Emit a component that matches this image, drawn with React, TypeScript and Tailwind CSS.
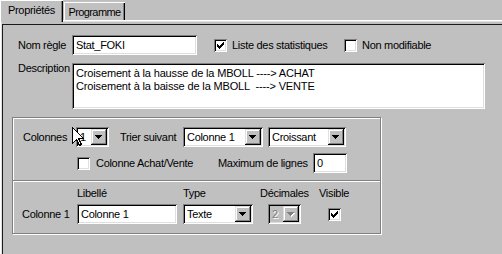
const sunken =
  "shadow-[inset_1px_1px_0_#808080,inset_-1px_-1px_0_#fff,inset_2px_2px_0_#000,inset_-2px_-2px_0_#dfdfdf]";
const raised =
  "shadow-[inset_-1px_-1px_0_#000,inset_1px_1px_0_#dfdfdf,inset_-2px_-2px_0_#808080,inset_2px_2px_0_#fff]";

function Arrow({ disabled }: { disabled?: boolean }) {
  return (
    <svg width="8" height="5" viewBox="0 0 8 5" shapeRendering="crispEdges">
      {disabled && <polygon points="1,1 8,1 4.5,5" fill="#fff" />}
      <polygon points="0,0 7,0 3.5,4" fill={disabled ? "#808080" : "#000"} />
    </svg>
  );
}

function Combo({
  value,
  width,
  disabled,
}: {
  value: string;
  width: string;
  disabled?: boolean;
}) {
  return (
    <div
      className={`flex h-[20px] shrink-0 p-[2px] ${width} ${sunken} ${
        disabled ? "bg-[#c0c0c0]" : "bg-white"
      }`}
    >
      <span
        className={`flex-1 truncate pl-[2px] leading-[16px] ${
          disabled ? "text-[#808080] [text-shadow:1px_1px_0_#fff]" : ""
        }`}
      >
        {value}
      </span>
      <span className={`flex h-[16px] w-[16px] items-center justify-center bg-[#c0c0c0] ${raised}`}>
        <Arrow disabled={disabled} />
      </span>
    </div>
  );
}

function Input({ value, width }: { value: string; width: string }) {
  return (
    <div className={`h-[20px] shrink-0 bg-white pl-[4px] leading-[20px] ${width} ${sunken}`}>
      {value}
    </div>
  );
}

function Checkbox({ checked }: { checked?: boolean }) {
  return (
    <span className={`flex h-[13px] w-[13px] shrink-0 bg-white ${sunken}`}>
      {checked && (
        <svg width="13" height="13" viewBox="0 0 13 13" shapeRendering="crispEdges">
          <path
            d="M9 3h1v1h-1zM8 4h2v1h-2zM3 5h1v1h-1zM7 5h3v1h-3zM3 6h2v1h-2zM6 6h3v1h-3zM3 7h5v1h-5zM4 8h3v1h-3zM5 9h1v1h-1z"
            fill="#000"
          />
        </svg>
      )}
    </span>
  );
}

export default function App() {
  return (
    <div className="relative flex h-[254px] w-[502px] flex-col overflow-hidden bg-[#c0c0c0] font-['Liberation_Sans',Arial,sans-serif] text-[11px] leading-[13px] tracking-[-0.3px] text-black">
      <div className="flex h-[20px] items-start">
        <div className="relative z-10 flex h-[22px] w-[63px] justify-center bg-[#c0c0c0] pt-[4px] shadow-[inset_1px_1px_0_#fff,inset_-1px_0_0_#000,inset_-2px_0_0_#808080]">
          Propriétés
        </div>
        <div className="ml-[1px] mt-[2px] flex h-[18px] w-[61px] justify-center pt-[4px] tracking-[-0.6px] shadow-[inset_1px_1px_0_#fff,inset_-1px_0_0_#000,inset_-2px_0_0_#808080]">
          Programme
        </div>
      </div>

      <div className="flex-1 border-l border-t border-white">
        <div className="h-full border-l border-t border-[#dfdfdf]">
          <div className="mt-[2px] h-full border-l border-t border-[#1a1a1a]">
            {/* Nom règle */}
            <div className="mt-[10px] flex h-[20px] items-center pl-[15px]">
              <span className="w-[54px]">Nom règle</span>
              <Input value="Stat_FOKI" width="w-[125px]" />
              <span className="ml-[17px] flex items-center gap-[5px]">
                <Checkbox checked />
                <span className="w-[107px]">Liste des statistiques</span>
              </span>
              <span className="ml-[5px] flex items-center gap-[5px]">
                <Checkbox />
                <span>Non modifiable</span>
              </span>
            </div>

            {/* Description */}
            <div className="mt-[8px] flex pl-[15px]">
              <span className="w-[54px] leading-[11px]">Description</span>
              <div
                className={`h-[46px] w-[413px] whitespace-pre bg-white pl-[4px] pt-[4px] tracking-[-0.15px] ${sunken}`}
              >
                <div>Croisement à la hausse de la MBOLL ----&gt; ACHAT</div>
                <div>Croisement à la baisse de la MBOLL  ----&gt; VENTE</div>
              </div>
            </div>

            {/* Colonnes group */}
            <div className="ml-[9px] mt-[8px] w-[369px] border border-[#808080] pb-[9px] shadow-[inset_1px_1px_0_#fff,1px_1px_0_#fff]">
              <div className="mt-[9px] flex h-[20px] items-center pl-[10px]">
                <span className="w-[53px]">Colonnes</span>
                <Combo value="1" width="w-[33px]" />
                <span className="ml-[11px] w-[63px]">Trier suivant</span>
                <Combo value="Colonne 1" width="w-[80px]" />
                <span className="ml-[5px]">
                  <Combo value="Croissant" width="w-[78px]" />
                </span>
              </div>

              <div className="mt-[6px] flex h-[20px] items-center pl-[64px]">
                <Checkbox />
                <span className="ml-[6px] w-[122px]">Colonne Achat/Vente</span>
                <span className="w-[95px] whitespace-nowrap">Maximum de lignes</span>
                <Input value="0" width="w-[34px]" />
              </div>

              <div className="mt-[7px] border-b border-t border-b-white border-t-[#808080]" />

              <div className="mt-[5px] flex pl-[64px]">
                <span className="w-[106px]">Libellé</span>
                <span className="w-[77px]">Type</span>
                <span className="w-[59px]">Décimales</span>
                <span>Visible</span>
              </div>

              <div className="mt-[4px] flex h-[20px] items-center pl-[9px]">
                <span className="w-[55px]">Colonne 1</span>
                <Input value="Colonne 1" width="w-[100px]" />
                <span className="ml-[6px]">
                  <Combo value="Texte" width="w-[70px]" />
                </span>
                <span className="ml-[15px]">
                  <Combo value="2" width="w-[33px]" disabled />
                </span>
                <span className="ml-[27px]">
                  <Checkbox checked />
                </span>
              </div>
            </div>
          </div>
        </div>
      </div>

      {/* mouse pointer */}
      <svg
        className="absolute left-[72px] top-[127px]"
        width="13"
        height="20"
        viewBox="0 0 13 20"
        shapeRendering="crispEdges"
      >
        <path
          d="M0.5 0.5 L0.5 16.5 L4.5 12.5 L7.5 18.5 L9.5 17.5 L6.5 11.5 L11.5 11.5 Z"
          fill="#fff"
          stroke="#000"
          strokeWidth="1"
        />
      </svg>
    </div>
  );
}
